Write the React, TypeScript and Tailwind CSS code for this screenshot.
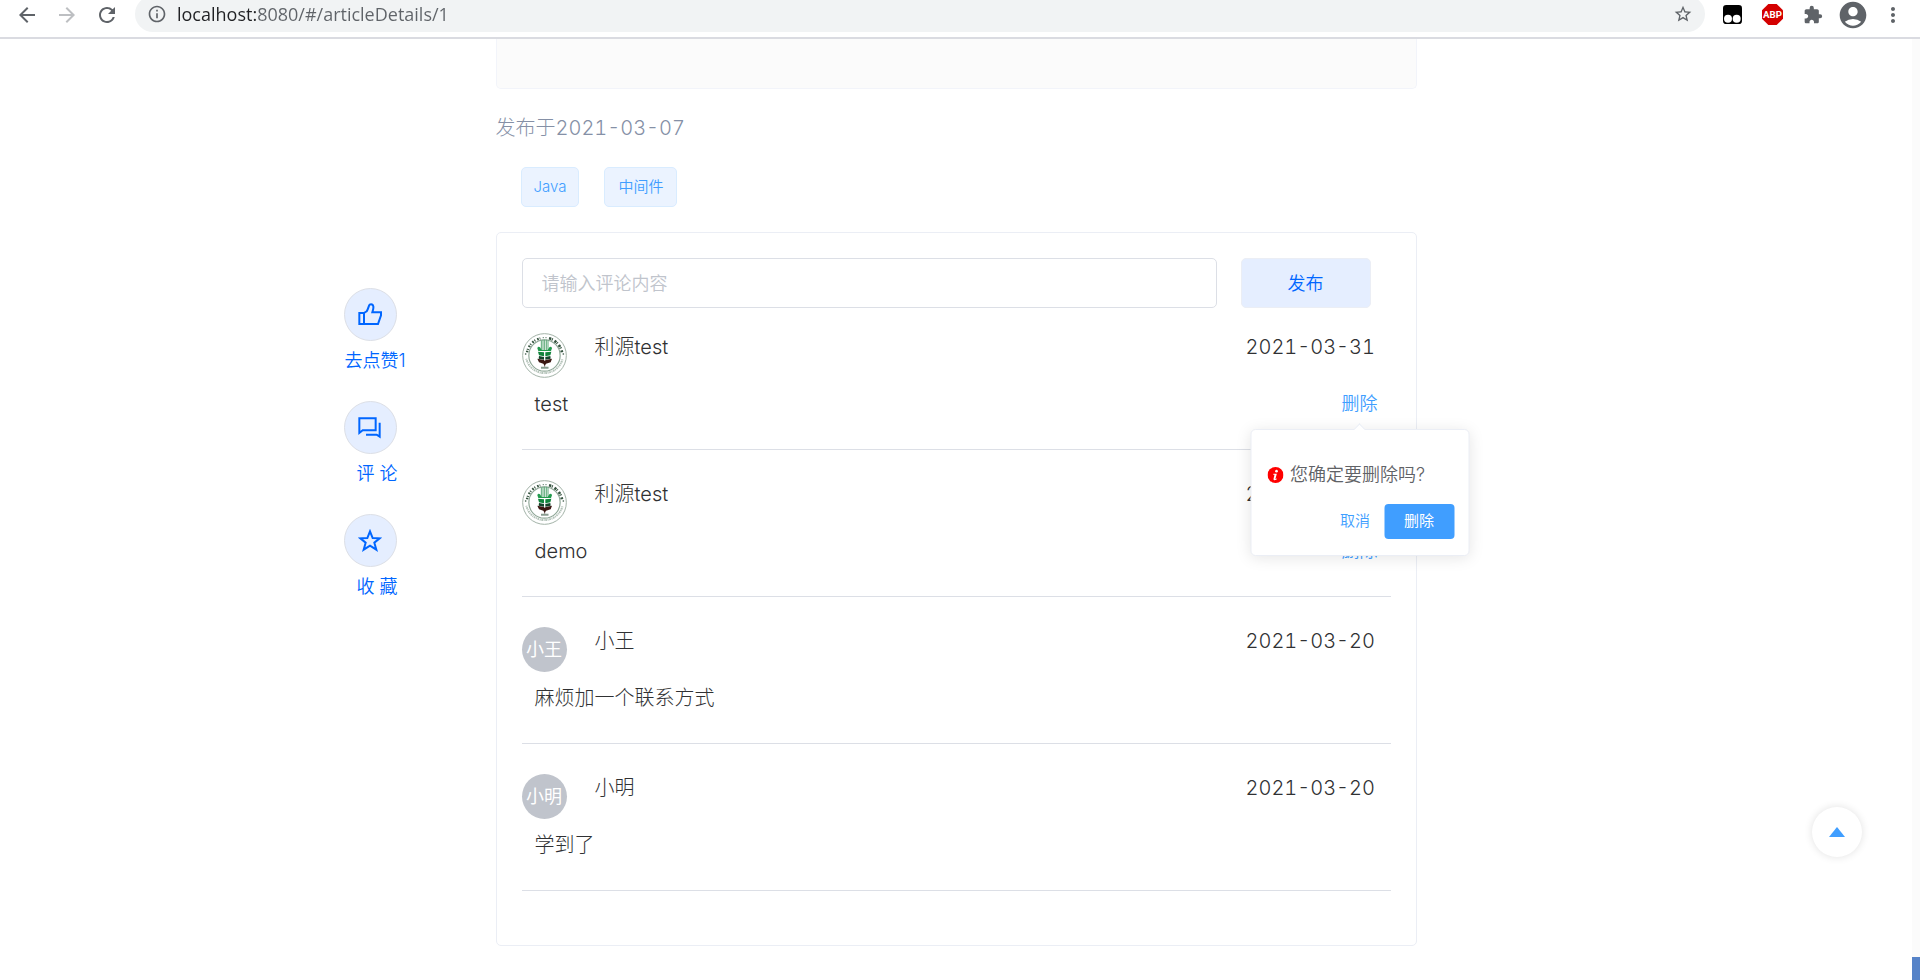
import React, { useState } from 'react';
import { MdAccountCircle, MdArrowBack, MdArrowForward, MdExtension, MdInfoOutline, MdMoreVert, MdRefresh, MdStarBorder } from 'react-icons/md';

type Comment = {
  id: number;
  author: string;
  date: string;
  content: string;
  hasLogo?: boolean;
  own?: boolean;
};

const comments: Comment[] = [
  { id: 1, author: '利源test', date: '2021-03-31', content: 'test', hasLogo: true, own: true },
  { id: 2, author: '利源test', date: '2021-03-31', content: 'demo', hasLogo: true, own: true },
  { id: 3, author: '小王', date: '2021-03-20', content: '麻烦加一个联系方式' },
  { id: 4, author: '小明', date: '2021-03-20', content: '学到了' },
];

function ThumbIcon() {
  return (
    <svg viewBox="0 0 72 72" className="size-6" fill="none" stroke="currentColor" strokeWidth="6" aria-hidden="true">
      <path d="M4 30H18V63H4Z" />
      <path d="M18 30L26 25C31 18 31 10 35 5C40 2 45 5 46 10C47 16 45 21 43 28H69V37L60 63H18" />
    </svg>
  );
}

function ChatIcon() {
  return (
    <svg viewBox="0 0 72 72" className="size-6" fill="none" stroke="currentColor" strokeWidth="6" aria-hidden="true">
      <path d="M4 7H53V43H14L4 51Z" />
      <path d="M65 20V62L56 56H24" />
    </svg>
  );
}

function StarIcon() {
  return (
    <svg viewBox="0 0 72 72" className="size-6" fill="none" stroke="currentColor" strokeWidth="6" aria-hidden="true">
      <path d="M36 7L44 27L65 28L49 41L55 62L36 50L17 62L23 41L7 28L28 27Z" />
    </svg>
  );
}

function SchoolLogo() {
  return (
    <svg viewBox="0 0 135 135" className="size-[45px] shrink-0" fill="none" role="img" aria-label="头像">
      <circle cx="67.5" cy="67.5" r="65.5" fill="#fff" stroke="#a3b3a8" strokeWidth="3" />
      <circle cx="67.5" cy="67.5" r="47" stroke="#8fa797" strokeWidth="3.5" />
      <path d="M15 58A53 53 0 0 1 55 16" stroke="#35533f" strokeWidth="7" strokeDasharray="5 3 3 6" />
      <path d="M62 14H74" stroke="#6d8576" strokeWidth="3" strokeDasharray="4 4" />
      <path d="M81 16A53 53 0 0 1 120 58" stroke="#35533f" strokeWidth="8" strokeDasharray="7 2 3 6" />
      <path d="M13 77A56 56 0 0 0 122 77" stroke="#b3c2b8" strokeWidth="6" strokeDasharray="3 2 5 2" />
      <circle cx="11" cy="63" r="2.5" fill="#35533f" />
      <circle cx="124" cy="63" r="2.5" fill="#35533f" />
      <path d="M58 22V54M63 20V54M68 20V54M73 20V54M78 22V54" stroke="#5aa876" strokeWidth="3" />
      <path d="M46 46Q48 39 54 43L59 51H77L82 43Q88 39 90 46L87 54H49Z" fill="#219a4c" />
      <path d="M48 56L66 58V70L51 67ZM70 58L88 56L85 67L70 70Z" fill="#10833b" />
      <path d="M51 69L66 72V80L50 77ZM70 72L85 69L86 77L70 80Z" fill="#12452a" />
      <path d="M46 77L66 81L68 84L71 81L90 77L86 88L72 92L68 98L64 92L51 88Z" fill="#3b1712" />
      <path d="M68 92V101" stroke="#3b1712" strokeWidth="2" />
      <path d="M58 104H79" stroke="#4f6a58" strokeWidth="6" strokeDasharray="4 2" />
    </svg>
  );
}

function BrowserBar() {
  return (
    <header className="flex h-[39px] shrink-0 items-start overflow-hidden border-b-2 border-[#dadbe1] bg-white text-[#5f6368]">
      <nav aria-label="浏览器" className="flex h-[29px] w-[135px] shrink-0 items-center gap-4 pl-[15px]">
        <button aria-label="后退"><MdArrowBack className="size-6" /></button>
        <button aria-label="前进" className="text-[#bdbfc2]"><MdArrowForward className="size-6" /></button>
        <button aria-label="刷新"><MdRefresh className="size-6" /></button>
      </nav>
      <div className="-mt-1 flex h-9 min-w-0 flex-1 items-center rounded-full bg-[#f1f3f4] px-3">
        <MdInfoOutline className="size-5 shrink-0" />
        <input
          aria-label="地址"
          defaultValue="localhost:8080/#/articleDetails/1"
          className="ml-2.5 min-w-0 flex-1 bg-[linear-gradient(to_right,#202124_79px,#5f6368_79px)] bg-clip-text font-['Open_Sans','Noto_Sans',sans-serif] text-[18px] font-normal text-transparent outline-none"
        />
        <button aria-label="收藏此页"><MdStarBorder className="size-5" /></button>
      </div>
      <div className="flex h-[29px] shrink-0 items-center pr-[15px] pl-[18px]">
        <button aria-label="脚本管理">
          <svg viewBox="0 0 57 57" className="size-[19px]" aria-hidden="true">
            <rect width="57" height="57" rx="10" fill="#000" />
            <circle cx="15" cy="41" r="12" fill="#fff" />
            <circle cx="41" cy="41" r="12" fill="#fff" />
          </svg>
        </button>
        <button aria-label="广告拦截" className="ml-5">
          <svg viewBox="0 0 63 63" className="size-[21px]" aria-hidden="true">
            <path d="M19 0H44L63 19V44L44 63H19L0 44V19Z" fill="#d40000" />
            <text x="31.5" y="42" textAnchor="middle" fontSize="29" fontWeight="700" fill="#fff" fontFamily="Roboto, sans-serif">ABP</text>
          </svg>
        </button>
        <button aria-label="扩展程序" className="ml-5"><MdExtension className="size-5" /></button>
        <button aria-label="用户" className="ml-3.5"><MdAccountCircle className="size-8" /></button>
        <button aria-label="更多" className="ml-3"><MdMoreVert className="size-6" /></button>
      </div>
    </header>
  );
}

function SideAction({ label, indent, children }: { label: string; indent?: boolean; children: React.ReactNode }) {
  return (
    <button className="flex flex-col items-start text-[#0066ff]">
      <span className="flex size-[53px] items-center justify-center rounded-full border border-[#dcdfe6] bg-[#e5eeff]">{children}</span>
      <span className={indent ? 'mt-1.5 pl-[13px] text-[18px] leading-7 font-[350] whitespace-pre' : 'mt-1.5 pl-px text-[18px] leading-7 font-[350]'}>{label}</span>
    </button>
  );
}

function ConfirmPopover({ onClose }: { onClose: () => void }) {
  return (
    <div
      role="dialog"
      aria-label="删除确认"
      className="absolute top-full left-1/2 z-10 mt-[11px] w-[219px] -translate-x-1/2 rounded-[5px] border border-[#ebeef5] bg-white px-3.5 pt-[30px] pb-4 shadow-[0_2px_15px_rgba(0,0,0,0.1)]"
    >
      <span className="absolute -top-[5px] left-1/2 size-2 -translate-x-1/2 rotate-45 border-t border-l border-[#ebeef5] bg-white" />
      <p className="flex items-center gap-[7px] pl-0.5 text-[18px] leading-[30px] font-[350] text-[#606266]">
        <svg viewBox="0 0 48 48" className="size-4 shrink-0" aria-hidden="true">
          <circle cx="24" cy="24" r="24" fill="#f00" />
          <circle cx="27" cy="12.5" r="4" fill="#fff" />
          <path d="M18 20H28L24 35Q25 37 29 34L28 37Q18 43 18 36L21 23H17Z" fill="#fff" />
        </svg>
        <span className="whitespace-nowrap">您确定要删除吗?</span>
      </p>
      <div className="mt-3.5 flex justify-end gap-3.5">
        <button onClick={onClose} className="text-[15px] font-[350] text-[#409eff]">取消</button>
        <button onClick={onClose} className="h-[35px] w-[70px] rounded-[4px] bg-[#409eff] text-[15px] font-normal text-white">删除</button>
      </div>
    </div>
  );
}

function CommentItem({ comment, open, onToggle }: { comment: Comment; open: boolean; onToggle: () => void }) {
  return (
    <li className="mb-[30px] border-b border-[#dcdfe6] pb-[31px]">
      <div className="flex items-start">
        {comment.hasLogo ? (
          <SchoolLogo />
        ) : (
          <span className="flex size-[45px] shrink-0 items-center justify-center rounded-full bg-[#c0c4cc] text-[18px] font-normal whitespace-nowrap text-white">
            {comment.author}
          </span>
        )}
        <span className="ml-7 flex-1 text-xl leading-7">{comment.author}</span>
        <time className="w-[145px] text-xl leading-7 tabular-nums">{comment.date}</time>
      </div>
      <div className="mt-3 flex items-center justify-between px-[13px]">
        <p className="text-xl leading-7">{comment.content}</p>
        {comment.own && (
          <div className="relative flex">
            <button onClick={onToggle} className="text-[18px] leading-7 font-[350] text-[#409eff]">删除</button>
            {open && <ConfirmPopover onClose={onToggle} />}
          </div>
        )}
      </div>
    </li>
  );
}

export default function App() {
  const [openId, setOpenId] = useState<number | null>(1);

  return (
    <div className="flex min-h-screen flex-col bg-white font-['Inter','Noto_Sans_CJK_SC',sans-serif] font-light text-[#303133]">
      <BrowserBar />
      <div className="flex flex-1">
        <main className="grid min-w-0 flex-1 grid-cols-[minmax(152px,1fr)_minmax(0,921px)_minmax(0,1fr)]">
          <aside className="mt-[249px] flex w-[152px] flex-col gap-[26px] justify-self-end">
            <SideAction label="去点赞1"><ThumbIcon /></SideAction>
            <SideAction label="评 论" indent><ChatIcon /></SideAction>
            <SideAction label="收 藏" indent><StarIcon /></SideAction>
          </aside>
          <article className="pb-8">
            <div className="h-[50px] rounded-b-[5px] border-x border-b border-[#f2f4fa] bg-[#fbfbfb]" />
            <p className="mt-[25px] text-xl leading-7 text-[#8590a6] tabular-nums">发布于2021-03-07</p>
            <div className="mt-[25px] flex gap-[25px] pl-[25px] text-[15px] font-[350] text-[#409eff]">
              <a href="#java" className="flex h-10 items-center rounded-[5px] border border-[#d9ecff] bg-[#ebf3ff] px-3">Java</a>
              <a href="#middleware" className="flex h-10 items-center rounded-[5px] border border-[#d9ecff] bg-[#ebf3ff] px-[13px]">中间件</a>
            </div>
            <section aria-label="评论" className="mt-[25px] rounded-[5px] border border-[#ebeef5] px-[25px] pt-[25px] pb-6">
              <form className="flex gap-6 pr-5" onSubmit={(e) => e.preventDefault()}>
                <input
                  aria-label="评论内容"
                  placeholder="请输入评论内容"
                  className="h-[50px] min-w-0 flex-1 rounded-[5px] border border-[#dcdfe6] px-[19px] text-[18px] font-[350] outline-none placeholder:text-[#c0c4cc]"
                />
                <button className="h-[50px] w-[130px] rounded-[5px] border border-[#ebeef5] bg-[#e5eeff] text-[18px] font-[350] text-[#0066ff]">发布</button>
              </form>
              <ul className="mt-[25px]">
                {comments.map((c) => (
                  <CommentItem key={c.id} comment={c} open={openId === c.id} onToggle={() => setOpenId(openId === c.id ? null : c.id)} />
                ))}
              </ul>
            </section>
          </article>
        </main>
        <div className="flex w-2 shrink-0 flex-col justify-end bg-[#fbfbfb]">
          <div className="h-[23px] bg-[#5683c8]" />
        </div>
      </div>
      <button aria-label="回到顶部" className="fixed right-[58px] bottom-[123px] flex size-[50px] items-center justify-center rounded-full bg-white shadow-[0_0_8px_rgba(0,0,0,0.12)]">
        <svg viewBox="0 0 16 10" className="h-2.5 w-4" aria-hidden="true">
          <path d="M8 0L16 10H0Z" fill="#409eff" />
        </svg>
      </button>
    </div>
  );
}
